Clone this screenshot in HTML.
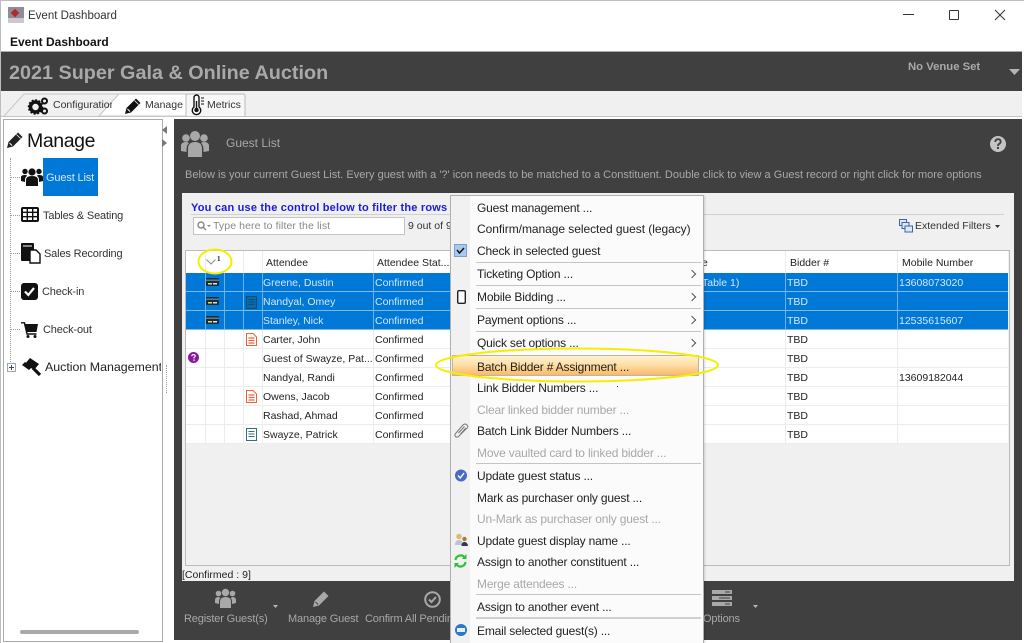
<!DOCTYPE html>
<html><head><meta charset="utf-8"><style>
html,body{margin:0;padding:0;width:1024px;height:643px;overflow:hidden;background:#fff}
body{font-family:"Liberation Sans",sans-serif;font-size:10.5px;color:#222;position:relative;filter:blur(.25px)}
.a{position:absolute}
.t{position:absolute;white-space:nowrap;line-height:14px;height:14px}
svg{position:absolute;overflow:visible}
.row{position:absolute;left:186px;width:822px;height:19px;border-bottom:1px solid #ececec;box-sizing:border-box}
.sel{background:#0078d7;border-bottom:1px solid #7fb9e8}
.v{position:absolute;width:1px;background:#ececec}
.vs{position:absolute;width:1px;background:#6fb1e6}
.w{color:#d4e8f8}
.m{position:absolute;left:477px;font-size:12px;letter-spacing:-.18px;white-space:nowrap;line-height:14px;color:#222}
.d{color:#a8a8a8}
.sp{position:absolute;left:476px;width:225px;height:1px;background:#c4c4c4}
.ar{position:absolute;left:689px;width:5px;height:5px;border-top:1px solid #555;border-right:1px solid #555;transform:rotate(45deg)}
.nav{position:absolute;font-size:11px;letter-spacing:-.15px;white-space:nowrap;line-height:14px;color:#222}
.bt{position:absolute;font-size:11px;letter-spacing:-.15px;color:#a8a8a8;white-space:nowrap;line-height:14px}
</style></head><body>

<!-- window chrome -->
<div class="a" style="left:0;top:0;width:1024px;height:51px;background:#fff"></div>
<div class="a" style="left:8px;top:7px;width:16px;height:16px;background:#8d8d96"></div>
<div class="a" style="left:12px;top:10px;width:6px;height:6px;background:#b02a2a;transform:rotate(45deg)"></div>
<div class="a" style="left:8px;top:18px;width:16px;height:5px;background:#c9c9cf"></div>
<div class="t" style="left:28px;top:9px;font-size:11.5px;color:#333">Event Dashboard</div>
<div class="t" style="left:10px;top:35px;font-size:12px;font-weight:bold;color:#111">Event Dashboard</div>
<div class="a" style="left:903px;top:14px;width:11px;height:1px;background:#333"></div>
<div class="a" style="left:949px;top:10px;width:8px;height:8px;border:1px solid #333;border-radius:1px"></div>
<svg style="left:995px;top:10px" width="10" height="10"><path d="M0 0L10 10M10 0L0 10" stroke="#333" stroke-width="1" fill="none"/></svg>

<!-- dark header -->
<div class="a" style="left:0;top:51px;width:1024px;height:1px;background:#aaa"></div>
<div class="a" style="left:0;top:52px;width:1024px;height:39px;background:#404040"></div>
<div class="t" style="left:9px;top:62px;height:22px;line-height:22px;font-size:19.8px;font-weight:bold;color:#a9a9a9">2021 Super Gala &amp; Online Auction</div>
<div class="t" style="left:908px;top:60px;font-size:11.3px;font-weight:bold;color:#a9a9a9">No Venue Set</div>
<svg style="left:1009px;top:69px" width="12" height="7"><path d="M0 0H11L5.500 6Z" fill="#b5b5b5"/></svg>

<!-- tab strip -->
<div class="a" style="left:0;top:91px;width:1024px;height:26px;background:#f0f0f0"></div>
<div class="a" style="left:0;top:116px;width:1024px;height:1px;background:#c4c4c4"></div>
<svg style="left:3px;top:93px" width="245" height="24">
<path d="M1 23L21 1H116L96 23" fill="#f0f0f0" stroke="#c8c8c8"/>
<path d="M96 23L116 1H183V23Z" fill="#fff" stroke="#c8c8c8"/>
<path d="M183 23V3Q183 1 185 1H240Q242 1 242 3V23" fill="#f7f7f7" stroke="#bbb"/>
</svg>
<svg style="left:28px;top:97px" width="21" height="18"><circle cx="7.500" cy="10" r="5" fill="none" stroke="#111" stroke-width="3.500"/><circle cx="7.500" cy="10" r="7" fill="none" stroke="#111" stroke-width="1.500" stroke-dasharray="2 1.600"/><circle cx="16.500" cy="4" r="2.500" fill="none" stroke="#111" stroke-width="2"/><circle cx="16.500" cy="14" r="2.500" fill="none" stroke="#111" stroke-width="2"/></svg>
<div class="t" style="left:53px;top:98px;width:59px;overflow:hidden;color:#333">Configuration</div>
<svg style="left:124px;top:97px" width="18" height="18"><path d="M1 17L2.500 11L12 1.500L16.500 6L7 15.500Z" fill="#111"/><path d="M3.500 12L6 14.500" stroke="#fff" stroke-width="1"/><path d="M10.500 3.500L14.500 7.500" stroke="#fff" stroke-width=".8"/></svg>
<div class="t" style="left:145px;top:98px;color:#333">Manage</div>
<svg style="left:191px;top:95px" width="15" height="21"><path d="M3 2.500a2.500 2.500 0 0 1 5 0V12a4.200 4.200 0 1 1-5 0Z" fill="#fff" stroke="#111" stroke-width="1.400"/><circle cx="5.500" cy="15" r="2.200" fill="#111"/><path d="M5.500 6V14" stroke="#111" stroke-width="1.400"/><path d="M10 3h3M10 6h3M10 9h3" stroke="#111"/></svg>
<div class="t" style="left:207px;top:98px;color:#333">Metrics</div>

<!-- left panel -->
<div class="a" style="left:3px;top:119px;width:158px;height:521px;background:#fff;border:1px solid #aaa"></div>
<svg style="left:6px;top:131px" width="18" height="18"><path d="M1 17L2.500 11L12 1.500L16.500 6L7 15.500Z" fill="#222"/><path d="M3.500 12L6 14.500" stroke="#fff" stroke-width="1"/><path d="M10.500 3.500L14.500 7.500" stroke="#fff" stroke-width=".8"/></svg>
<div class="t" style="left:27px;top:130px;height:22px;line-height:22px;font-size:19.5px;letter-spacing:-.4px;color:#111">Manage</div>
<div class="a" style="left:10px;top:158px;width:0;height:208px;border-left:1px dotted #999"></div>
<div class="a" style="left:11px;top:177px;width:9px;border-top:1px dotted #999"></div>
<div class="a" style="left:11px;top:215px;width:9px;border-top:1px dotted #999"></div>
<div class="a" style="left:11px;top:253px;width:9px;border-top:1px dotted #999"></div>
<div class="a" style="left:11px;top:291px;width:9px;border-top:1px dotted #999"></div>
<div class="a" style="left:11px;top:329px;width:9px;border-top:1px dotted #999"></div>
<div class="a" style="left:43px;top:158px;width:55px;height:38px;background:#0078d7"></div>
<svg style="left:21px;top:167px" width="22" height="20" fill="#111"><circle cx="11" cy="5" r="3.600"/><circle cx="4" cy="4.500" r="2.700"/><circle cx="18" cy="4.500" r="2.700"/><path d="M5 19V13Q5 9 11 9T17 13V19Z"/><path d="M0 14V10Q0 8 4 8 6 8 6 9 4 10 4 13V15Z"/><path d="M22 14V10Q22 8 18 8 16 8 16 9 18 10 18 13V15Z"/></svg>
<div class="nav" style="left:46px;top:171px;color:#d6e8f8">Guest List</div>
<svg style="left:21px;top:207px" width="18" height="15"><rect x="1" y="1" width="16" height="13" fill="#fff" stroke="#111" stroke-width="2" rx="1"/><path d="M1 5.300H17M1 9.700H17M6.300 1V14M11.700 1V14" stroke="#111" stroke-width="1.400"/></svg>
<div class="nav" style="left:43px;top:209px;color:#333">Tables &amp; Seating</div>
<svg style="left:21px;top:243px" width="20" height="20"><rect x="0" y="0" width="13" height="18" fill="#111" rx="1"/><path d="M2 3H11" stroke="#fff"/><path d="M9 7H15L19 11V20H9Z" fill="#fff" stroke="#111" stroke-width="1.400"/></svg>
<div class="nav" style="left:44px;top:247px;color:#333">Sales Recording</div>
<svg style="left:21px;top:283px" width="17" height="17"><rect width="17" height="17" rx="3" fill="#111"/><path d="M4 8.500L7.300 12L13 5" fill="none" stroke="#fff" stroke-width="2.200"/></svg>
<div class="nav" style="left:42px;top:285px;color:#333">Check-in</div>
<svg style="left:21px;top:322px" width="18" height="16" fill="#111"><path d="M3 2H17L15.500 10H5Z"/><path d="M0 .800H3.500L6 12H15.500" fill="none" stroke="#111" stroke-width="1.400"/><circle cx="7" cy="14.500" r="1.500"/><circle cx="14" cy="14.500" r="1.500"/></svg>
<div class="nav" style="left:43px;top:323px;color:#333">Check-out</div>
<div class="a" style="left:7px;top:363px;width:7px;height:7px;border:1px solid #9aa5b5;background:#fff"></div>
<div class="a" style="left:9px;top:367px;width:5px;height:1px;background:#446"></div>
<div class="a" style="left:11px;top:365px;width:1px;height:5px;background:#446"></div>
<svg style="left:22px;top:358px" width="19" height="19"><path d="M8 0L17 6L12 12L3 6Z" fill="#111"/><path d="M0 7L3 4L10 9L7 12Z" fill="#111"/><path d="M11 10L18 17" stroke="#111" stroke-width="3.200"/></svg>
<div class="t" style="left:45px;top:360px;font-size:12.4px;width:116px;overflow:hidden;color:#222">Auction Management</div>
<div class="a" style="left:20px;top:630px;width:119px;height:4px;background:#aaa;border-radius:2px"></div>
<svg style="left:161px;top:126px" width="7" height="25"><path d="M6 0V8L1 4Z" fill="#777"/><path d="M1 13V21L6 17Z" fill="#777"/></svg>
<div class="a" style="left:166px;top:365px;height:28px;border-left:1px dotted #999"></div>

<!-- dark panel -->
<div class="a" style="left:174px;top:119px;width:848px;height:521px;background:#404040"></div>
<svg style="left:181px;top:130px" width="28" height="27" fill="#a8a8a8"><circle cx="14" cy="6" r="5"/><circle cx="5" cy="8" r="3.800"/><circle cx="23" cy="8" r="3.800"/><path d="M7 27V19Q7 12 14 12T21 19V27Z"/><path d="M0 21V16Q0 12 5 12 7 12 8 13 5.500 15 5.500 20V22Z"/><path d="M28 21V16Q28 12 23 12 21 12 20 13 22.500 15 22.500 20V22Z"/></svg>
<div class="t" style="left:226px;top:136px;font-size:12px;color:#a8a8a8">Guest List</div>
<svg style="left:990px;top:136px" width="16" height="16"><circle cx="8" cy="8" r="8" fill="#c4c4c4"/><path d="M5.300 6Q5.300 3.200 8 3.200T10.700 5.700Q10.700 7 9 8 8 8.600 8 10" fill="none" stroke="#404040" stroke-width="1.800"/><rect x="7" y="11" width="2" height="2" fill="#404040"/></svg>
<div class="t" style="left:185px;top:168px;font-size:11px;color:#a8a8a8">Below is your current Guest List. Every guest with a '?' icon needs to be matched to a Constituent. Double click to view a Guest record or right click for more options</div>

<!-- gray content -->
<div class="a" style="left:182px;top:193px;width:832px;height:388px;background:#f0f0f0"></div>
<div class="a" style="left:191px;top:214px;width:813px;height:1px;background:#d0d0d0"></div>
<div class="t" style="left:191px;top:201px;font-size:11px;font-weight:bold;color:#1a1ae0;letter-spacing:.2px">You can use the control below to filter the rows in this list</div>
<div class="a" style="left:193px;top:217px;width:210px;height:16px;background:#fff;border:1px solid #c4c4c4"></div>
<svg style="left:197px;top:221px" width="14" height="10"><circle cx="4" cy="4" r="3" fill="none" stroke="#888" stroke-width="1.400"/><path d="M6 6L9 9" stroke="#888" stroke-width="1.400"/><path d="M10 4H14L12 6Z" fill="#888"/></svg>
<div class="t" style="left:213px;top:219px;color:#888;letter-spacing:.1px">Type here to filter the list</div>
<div class="t" style="left:408px;top:219px;color:#333">9 out of 9</div>
<svg style="left:899px;top:219px" width="14" height="14" fill="#dfe9f7" stroke="#3a66a8"><rect x=".5" y=".5" width="7" height="6"/><rect x="3" y="3.500" width="7" height="6"/><rect x="6" y="7" width="7.500" height="6"/></svg>
<div class="t" style="left:915px;top:219px;color:#333">Extended Filters</div>
<svg style="left:995px;top:225px" width="5" height="3"><path d="M0 0H5L2.500 3Z" fill="#333"/></svg>

<!-- table -->
<div class="a" style="left:185px;top:250px;width:823px;height:314px;border:1px solid #bbb;background:#f0f0f0"></div>
<div class="a" style="left:186px;top:251px;width:822px;height:193px;background:#fff"></div>
<div class="t" style="left:266px;top:256px;color:#222">Attendee</div>
<div class="t" style="left:377px;top:256px;color:#222">Attendee Stat...</div>
<div class="t" style="left:790px;top:256px;color:#222">Bidder #</div>
<div class="t" style="left:902px;top:256px;color:#222">Mobile Number</div>

<div class="row sel" style="top:273px"></div>
<div class="row sel" style="top:292px"></div>
<div class="row sel" style="top:311px"></div>
<div class="row" style="top:330px"></div>
<div class="row" style="top:349px"></div>
<div class="row" style="top:368px"></div>
<div class="row" style="top:387px"></div>
<div class="row" style="top:406px"></div>
<div class="row" style="top:425px"></div>

<div class="v" style="left:205px;top:251px;height:193px"></div>
<div class="v" style="left:224px;top:273px;height:171px"></div>
<div class="v" style="left:243px;top:251px;height:193px"></div>
<div class="v" style="left:262px;top:251px;height:193px"></div>
<div class="v" style="left:373px;top:251px;height:193px"></div>
<div class="v" style="left:785px;top:251px;height:193px"></div>
<div class="v" style="left:897px;top:251px;height:193px"></div>
<div class="vs" style="left:205px;top:273px;height:57px"></div>
<div class="vs" style="left:224px;top:273px;height:57px"></div>
<div class="vs" style="left:243px;top:273px;height:57px"></div>
<div class="vs" style="left:262px;top:273px;height:57px"></div>
<div class="vs" style="left:373px;top:273px;height:57px"></div>
<div class="vs" style="left:785px;top:273px;height:57px"></div>
<div class="vs" style="left:897px;top:273px;height:57px"></div>

<svg style="left:206px;top:259px" width="10" height="6"><path d="M.5.5L5 5L9.500.5" fill="none" stroke="#888"/></svg>
<div class="t" style="left:217px;top:252px;font-size:7px;font-weight:bold;font-family:'Liberation Serif',serif;color:#222">1</div>

<svg style="left:206px;top:278px" width="13" height="9"><rect width="13" height="8" fill="#1e2c3a"/><rect y="1.500" width="13" height="1.500" fill="#5b7b94"/><rect x="2" y="5" width="4" height="1.500" fill="#e8e050"/><rect x="7" y="5" width="4" height="1.500" fill="#cfe6f5"/></svg>
<svg style="left:206px;top:297px" width="13" height="9"><rect width="13" height="8" fill="#1e2c3a"/><rect y="1.500" width="13" height="1.500" fill="#5b7b94"/><rect x="2" y="5" width="4" height="1.500" fill="#e8e050"/><rect x="7" y="5" width="4" height="1.500" fill="#cfe6f5"/></svg>
<svg style="left:206px;top:316px" width="13" height="9"><rect width="13" height="8" fill="#1e2c3a"/><rect y="1.500" width="13" height="1.500" fill="#5b7b94"/><rect x="2" y="5" width="4" height="1.500" fill="#e8e050"/><rect x="7" y="5" width="4" height="1.500" fill="#cfe6f5"/></svg>
<svg style="left:246px;top:296px" width="11" height="13"><rect x=".5" y=".5" width="10" height="12" fill="#0a6aa8" stroke="#0e4f78"/><path d="M2.500 3.500H8.500M2.500 6H8.500M2.500 8.500H8.500" stroke="#0e4f78"/></svg>
<svg style="left:246px;top:333px" width="11" height="13"><path d="M.5.500H7L10.500 4V12.500H.5Z" fill="#fff" stroke="#e8633a"/><path d="M2.500 5H8.500M2.500 7.500H8.500M2.500 10H8.500" stroke="#e8633a" stroke-width="1.200"/></svg>
<svg style="left:246px;top:390px" width="11" height="13"><path d="M.5.500H7L10.500 4V12.500H.5Z" fill="#fff" stroke="#e8633a"/><path d="M2.500 5H8.500M2.500 7.500H8.500M2.500 10H8.500" stroke="#e8633a" stroke-width="1.200"/></svg>
<svg style="left:246px;top:428px" width="11" height="13"><rect x=".5" y=".5" width="10" height="12" fill="#fff" stroke="#2f6f80"/><path d="M2.500 3.500H8.500M2.500 6H8.500M2.500 8.500H8.500" stroke="#2f6f80"/></svg>
<svg style="left:188px;top:352px" width="11" height="11"><circle cx="5.500" cy="5.500" r="5.500" fill="#8a1a9a"/><path d="M3.800 4.200Q3.800 2.600 5.500 2.600T7.200 4.100Q7.200 5 6 5.500V6.500" fill="none" stroke="#fff" stroke-width="1.100"/><rect x="5.300" y="7.500" width="1.400" height="1.300" fill="#fff"/></svg>

<div class="t w" style="left:263px;top:276px">Greene, Dustin</div>
<div class="t w" style="left:263px;top:295px">Nandyal, Omey</div>
<div class="t w" style="left:263px;top:314px">Stanley, Nick</div>
<div class="t" style="left:263px;top:333px">Carter, John</div>
<div class="t" style="left:263px;top:352px">Guest of Swayze, Pat...</div>
<div class="t" style="left:263px;top:371px">Nandyal, Randi</div>
<div class="t" style="left:263px;top:390px">Owens, Jacob</div>
<div class="t" style="left:263px;top:409px">Rashad, Ahmad</div>
<div class="t" style="left:263px;top:428px">Swayze, Patrick</div>

<div class="t w" style="left:375px;top:276px">Confirmed</div>
<div class="t w" style="left:375px;top:295px">Confirmed</div>
<div class="t w" style="left:375px;top:314px">Confirmed</div>
<div class="t" style="left:375px;top:333px">Confirmed</div>
<div class="t" style="left:375px;top:352px">Confirmed</div>
<div class="t" style="left:375px;top:371px">Confirmed</div>
<div class="t" style="left:375px;top:390px">Confirmed</div>
<div class="t" style="left:375px;top:409px">Confirmed</div>
<div class="t" style="left:375px;top:428px">Confirmed</div>

<div class="t w" style="left:702px;top:276px">Table 1)</div>
<div class="t" style="left:702px;top:256px">e</div>

<div class="t w" style="left:787px;top:276px">TBD</div>
<div class="t w" style="left:787px;top:295px">TBD</div>
<div class="t w" style="left:787px;top:314px">TBD</div>
<div class="t" style="left:787px;top:333px">TBD</div>
<div class="t" style="left:787px;top:352px">TBD</div>
<div class="t" style="left:787px;top:371px">TBD</div>
<div class="t" style="left:787px;top:390px">TBD</div>
<div class="t" style="left:787px;top:409px">TBD</div>
<div class="t" style="left:787px;top:428px">TBD</div>

<div class="t w" style="left:899px;top:276px">13608073020</div>
<div class="t w" style="left:899px;top:314px">12535615607</div>
<div class="t" style="left:899px;top:371px">13609182044</div>

<div class="t" style="left:182px;top:568px;color:#222">[Confirmed : 9]</div>

<!-- bottom toolbar -->
<svg style="left:215px;top:588px" width="21" height="20" fill="#a8a8a8"><circle cx="10.500" cy="4.500" r="3.700"/><circle cx="3.500" cy="5.500" r="2.800"/><circle cx="17.500" cy="5.500" r="2.800"/><path d="M5 20V14Q5 9 10.500 9T16 14V20Z"/><path d="M0 15V12Q0 9 3.500 9L5.500 10Q4 11 4 14V16Z"/><path d="M21 15V12Q21 9 17.500 9L15.500 10Q17 11 17 14V16Z"/></svg>
<div class="bt" style="left:184px;top:612px">Register Guest(s)</div>
<svg style="left:273px;top:605px" width="5" height="3"><path d="M0 0H5L2.500 3Z" fill="#b5b5b5"/></svg>
<svg style="left:312px;top:590px" width="18" height="18"><path d="M1 17L2.500 11L12 1.500L16.500 6L7 15.500Z" fill="#a8a8a8"/><path d="M3.500 12L6 14.500" stroke="#404040" stroke-width="1"/></svg>
<div class="bt" style="left:288px;top:612px">Manage Guest</div>
<svg style="left:424px;top:591px" width="17" height="17"><circle cx="8.500" cy="8.500" r="7.300" fill="none" stroke="#a8a8a8" stroke-width="2"/><path d="M5 8.500L7.500 11L12 6" fill="none" stroke="#a8a8a8" stroke-width="2"/></svg>
<div class="bt" style="left:365px;top:612px">Confirm All Pending</div>
<svg style="left:712px;top:590px" width="20" height="16"><rect width="20" height="4" fill="#a8a8a8"/><rect y="6" width="20" height="4" fill="#a8a8a8"/><rect y="12" width="20" height="4" fill="#a8a8a8"/><path d="M13 2H18M7 8H18M13 14H18" stroke="#404040"/></svg>
<div class="bt" style="left:703px;top:612px">Options</div>
<svg style="left:753px;top:605px" width="5" height="3"><path d="M0 0H5L2.500 3Z" fill="#b5b5b5"/></svg>

<!-- context menu -->
<div class="a" style="left:450px;top:195px;width:252px;height:448px;background:#fbfbfb;border:1px solid #b0b0b0;border-bottom:0;box-shadow:1px 1px 2px rgba(0,0,0,.15)"></div>
<div class="a" style="left:451px;top:196px;width:19px;height:447px;background:#f1f1f1"></div>

<div class="m" style="top:201px">Guest management ...</div>
<div class="m" style="top:222px;letter-spacing:-.05px">Confirm/manage selected guest (legacy)</div>
<div class="m" style="top:244px">Check in selected guest</div>
<div class="sp" style="top:262px"></div>
<div class="m" style="top:267px">Ticketing Option ...</div>
<div class="ar" style="top:271px"></div>
<div class="sp" style="top:285px"></div>
<div class="m" style="top:290px">Mobile Bidding ...</div>
<div class="ar" style="top:294px"></div>
<div class="sp" style="top:308px"></div>
<div class="m" style="top:313px">Payment options ...</div>
<div class="ar" style="top:317px"></div>
<div class="sp" style="top:331px"></div>
<div class="m" style="top:336px">Quick set options ...</div>
<div class="ar" style="top:340px"></div>

<div class="a" style="left:452px;top:355px;width:247px;height:21px;box-sizing:border-box;border:1px solid #bcb4a4;background:linear-gradient(#fff0d0,#fde0a8 45%,#fbb868)"></div>
<div class="m" style="top:360px;color:#222">Batch Bidder # Assignment ...</div>

<div class="m" style="top:381px">Link Bidder Numbers ...</div>
<div class="m d" style="top:403px">Clear linked bidder number ...</div>
<div class="m" style="top:424px">Batch Link Bidder Numbers ...</div>
<div class="m d" style="top:446px">Move vaulted card to linked bidder ...</div>
<div class="sp" style="top:463px"></div>
<div class="m" style="top:469px">Update guest status ...</div>
<div class="m" style="top:491px">Mark as purchaser only guest ...</div>
<div class="m d" style="top:512px">Un-Mark as purchaser only guest ...</div>
<div class="m" style="top:534px">Update guest display name ...</div>
<div class="m" style="top:555px">Assign to another constituent ...</div>
<div class="m d" style="top:577px">Merge attendees ...</div>
<div class="sp" style="top:594px"></div>
<div class="m" style="top:600px">Assign to another event ...</div>
<div class="sp" style="top:617px;height:2px;background:#d0d0d0"></div>
<div class="m" style="top:624px">Email selected guest(s) ...</div>

<!-- menu icons -->
<svg style="left:454px;top:244px" width="13" height="13"><rect x=".5" y=".5" width="12" height="12" fill="#a9c8ef" stroke="#7f9fcc"/><path d="M3 6L5.500 9L10 4" fill="none" stroke="#111" stroke-width="1.500"/></svg>
<svg style="left:457px;top:290px" width="9" height="14"><rect x=".7" y=".7" width="7.600" height="12.600" rx="1.200" fill="#fff" stroke="#222" stroke-width="1.400"/></svg>
<svg style="left:454px;top:423px" width="14" height="15" fill="none" stroke="#777"><path d="M2 10L9 2Q11 0 13 2T12 6L5 13Q3 15 1.500 13.500T2 10Z"/><path d="M4.500 10L10.500 3.500M6.500 11L12 5"/></svg>
<svg style="left:455px;top:469px" width="12" height="13"><circle cx="6" cy="6.500" r="6" fill="#4a68c8"/><path d="M3 6.500L5.200 9L9 4" fill="none" stroke="#fff" stroke-width="1.400"/></svg>
<svg style="left:454px;top:533px" width="15" height="13"><circle cx="5" cy="3.500" r="2.800" fill="#e6b676"/><path d="M1 12Q1 7 5 7T9 12Z" fill="#b9c4d6"/><circle cx="10.500" cy="6" r="2.200" fill="#a87a3a"/><path d="M7.500 13Q7.500 9 10.500 9T14 13Z" fill="#2d3a52"/></svg>
<svg style="left:454px;top:554px" width="13" height="14" fill="none" stroke="#2fc03a" stroke-width="2.200"><path d="M1.500 6A5 5 0 0 1 10.500 3.500"/><path d="M11.500 8A5 5 0 0 1 2.500 10.500"/><path d="M12.500 0V5H8" fill="#2fc03a" stroke="none"/><path d="M.5 14V9H5" fill="#2fc03a" stroke="none"/></svg>
<svg style="left:455px;top:624px" width="12" height="12"><circle cx="6" cy="6" r="6" fill="#2a78c8"/><rect x="2" y="4" width="8" height="4" fill="#e8eef6"/></svg>

<div class="a" style="left:617px;top:386px;width:1px;height:1px;background:#222"></div>

<!-- yellow annotation ellipses -->
<svg style="left:0;top:0" width="1024" height="643">
<ellipse cx="215" cy="261.500" rx="16.500" ry="12" fill="none" stroke="#f5ee00" stroke-width="2"/>
<ellipse cx="577" cy="365" rx="141" ry="16.500" fill="none" stroke="#f5ee00" stroke-width="2"/>
</svg>

<!-- window edges -->
<div class="a" style="left:0;top:0;width:1024px;height:1px;background:#bdbdbd"></div>
<div class="a" style="left:0;top:0;width:1px;height:643px;background:#bdbdbd"></div>
<div class="a" style="left:1022px;top:30px;width:2px;height:613px;background:#fff"></div>
</body></html>
